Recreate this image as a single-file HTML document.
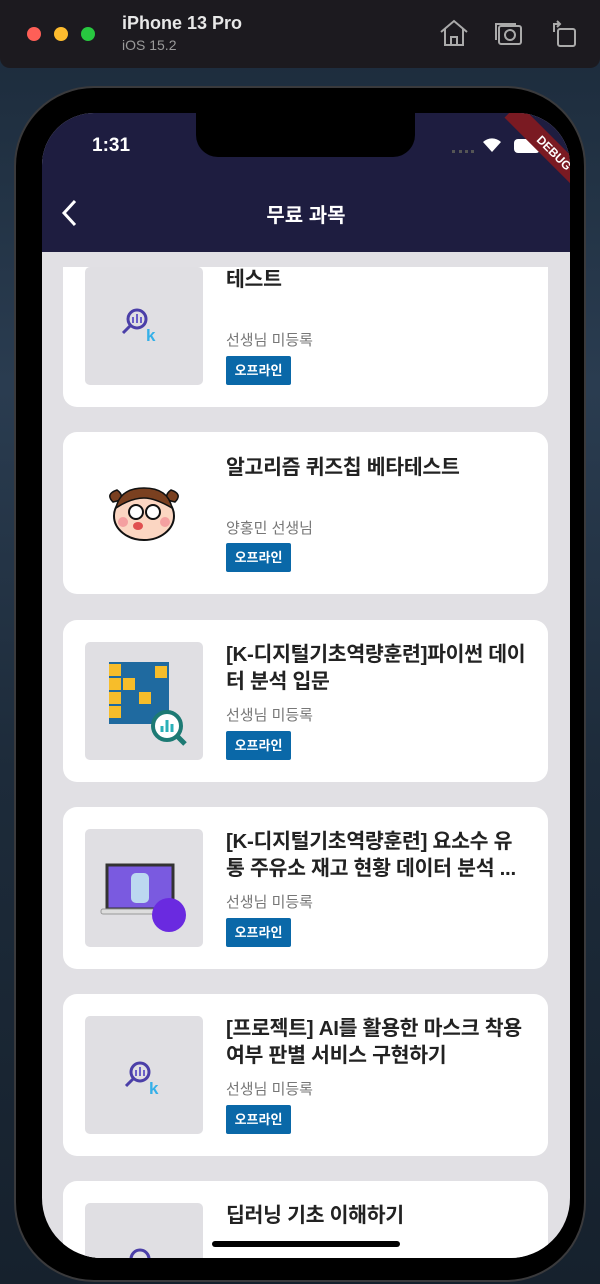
<!DOCTYPE html>
<html><head><meta charset="utf-8">
<style>
*{margin:0;padding:0;box-sizing:border-box}
html,body{width:600px;height:1284px;overflow:hidden}
body{position:relative;background:linear-gradient(180deg,#1b2a3a 0%,#2a3c50 30%,#1d2b3a 60%,#16212d 100%);font-family:"Liberation Sans","Noto Sans CJK KR",sans-serif}
.tb{position:absolute;left:0;top:0;width:600px;height:68px;background:#1c1a1f;border-radius:0 0 10px 10px}
.dot{position:absolute;top:27px;width:14px;height:14px;border-radius:50%}
.phone{position:absolute;left:14px;top:86px;width:572px;height:1196px;background:#000;border-radius:80px;border:2px solid #3a3a3c}
.screen{position:absolute;left:42px;top:113px;width:528px;height:1145px;background:#e1e0e4;border-radius:52px 52px 60px 60px;overflow:hidden}
.nav{position:absolute;left:0;top:0;width:528px;height:139px;background:#1e1d40;z-index:5;overflow:hidden}
.notch{position:absolute;left:154px;top:0;width:219px;height:44px;background:#000;border-radius:0 0 22px 22px}
.card{position:absolute;left:21px;width:485px;height:162px;background:#fff;border-radius:14px}
.img{position:absolute;left:22px;top:22px;width:118px;height:118px;background:#e0dfe3;border-radius:5px}
.t{position:absolute;left:163px;top:21px;width:300px;font-size:20.5px;font-weight:bold;color:#222;line-height:27px;letter-spacing:-0.3px;word-break:break-all}
.s{position:absolute;left:163px;top:84px;font-size:15px;color:#777}
.b{position:absolute;left:163px;top:111px;width:65px;height:29px;background:#0a68a8;color:#fff;font-size:13px;font-weight:bold;text-align:center;line-height:29px;border-radius:2px}
</style></head><body>
<div class="tb">
<div class="dot" style="left:27px;background:#fe5f57"></div>
<div class="dot" style="left:54px;background:#febc2e"></div>
<div class="dot" style="left:81px;background:#28c840"></div>
<div style="position:absolute;left:122px;top:13px;color:#e8e8e8;font-size:18px;font-weight:bold">iPhone 13 Pro</div>
<div style="position:absolute;left:122px;top:37px;color:#9a9a9a;font-size:14px">iOS 15.2</div>
<svg style="position:absolute;left:438px;top:18px" width="32" height="30" viewBox="0 0 32 30" fill="none" stroke="#aaa" stroke-width="2"><path d="M3 14 L16 3 L29 14 M7 11 V27 H25 V11 M13 27 V19 H19 V27"/></svg>
<svg style="position:absolute;left:494px;top:20px" width="30" height="28" viewBox="0 0 30 28" fill="none" stroke="#aaa" stroke-width="2"><rect x="5" y="6" width="22" height="18" rx="2"/><path d="M2 20 V4 H22"/><circle cx="16" cy="15" r="5"/></svg>
<svg style="position:absolute;left:550px;top:18px" width="28" height="30" viewBox="0 0 28 30" fill="none" stroke="#aaa" stroke-width="2"><rect x="8" y="11" width="17" height="17" rx="2"/><path d="M4 14 V6 H10 M7 3 L10 6 L7 9"/></svg>
</div>
<div class="phone"></div>
<div class="screen">
<div class="nav">
<div style="position:absolute;left:50px;top:22px;color:#fff;font-size:19px;font-weight:bold">1:31</div>
<div style="position:absolute;left:410px;top:37px;width:22px;height:3px;border-top:3px dotted #555"></div>
<svg style="position:absolute;left:440px;top:24px" width="20" height="16" viewBox="0 0 20 16"><path d="M10 15 L1 5 A13 13 0 0 1 19 5 Z" fill="#fff"/></svg>
<div style="position:absolute;left:472px;top:26px;width:26px;height:14px;background:#fff;border-radius:4px"></div>
<div style="position:absolute;left:452px;top:30px;width:120px;height:20px;background:#7a1a22;transform:rotate(45deg);color:#fff;font-size:12px;font-weight:bold;text-align:center;line-height:20px">DEBUG</div>
<div class="notch"></div>
<svg style="position:absolute;left:18px;top:85px" width="20" height="30" viewBox="0 0 20 30"><path d="M15 3 L4 15 L15 27" fill="none" stroke="#fff" stroke-width="3"/></svg>
<div style="position:absolute;left:0;width:528px;top:86px;text-align:center;color:#fff;font-size:20px;font-weight:bold">무료 과목</div>
</div>

<div class="card" style="top:132px"><div class="img" style="top:22px">
<svg width="118" height="118" viewBox="0 0 118 118"><circle cx="52" cy="52" r="9" fill="none" stroke="#4b3fa8" stroke-width="3"/><path d="M45 59 L38 66" stroke="#4b3fa8" stroke-width="3"/><path d="M48 56 V50 M52 56 V47 M56 56 V50" stroke="#6a5fc8" stroke-width="2"/><text x="61" y="74" font-size="17" font-weight="bold" fill="#35b0e8" font-family="Liberation Sans">k</text></svg>
</div><div class="t">테스트</div><div class="s">선생님 미등록</div><div class="b">오프라인</div></div>
<div style="position:absolute;left:0;top:139px;width:528px;height:15px;background:#e1e0e4;z-index:4"></div>

<div class="card" style="top:319px"><div class="img" style="background:#fff">
<svg width="118" height="118" viewBox="0 0 118 118"><path d="M28 48 Q20 40 32 36 Q38 40 36 46Z M90 48 Q98 40 86 36 Q80 40 82 46Z" fill="#7a4020" stroke="#111" stroke-width="1.5"/><ellipse cx="59" cy="62" rx="30" ry="24" fill="#fbd6c2" stroke="#111" stroke-width="2"/><path d="M31 54 Q35 34 59 34 Q83 34 87 54 Q70 44 59 44 Q46 44 31 54Z" fill="#7a4020" stroke="#111" stroke-width="1.5"/><circle cx="51" cy="58" r="7" fill="#fff" stroke="#111" stroke-width="2"/><circle cx="68" cy="58" r="7" fill="#fff" stroke="#111" stroke-width="2"/><circle cx="38" cy="68" r="5" fill="#f4a0a0"/><circle cx="80" cy="68" r="5" fill="#f4a0a0"/><ellipse cx="53" cy="72" rx="5" ry="4" fill="#e05050"/></svg>
</div><div class="t" style="top:22px">알고리즘 퀴즈칩 베타테스트</div><div class="s" style="top:85px">양홍민 선생님</div><div class="b">오프라인</div></div>

<div class="card" style="top:507px"><div class="img">
<svg width="118" height="118" viewBox="0 0 118 118"><rect x="24" y="20" width="60" height="62" fill="#1f6aa0"/>
<g fill="#f7bd2a"><rect x="24" y="22" width="12" height="12"/><rect x="24" y="36" width="12" height="12"/><rect x="24" y="50" width="12" height="12"/><rect x="24" y="64" width="12" height="12"/><rect x="38" y="36" width="12" height="12"/><rect x="70" y="24" width="12" height="12"/><rect x="54" y="50" width="12" height="12"/></g>
<circle cx="82" cy="84" r="14" fill="#fff" stroke="#1d7a74" stroke-width="4"/><path d="M92 94 L100 102" stroke="#1d7a74" stroke-width="5"/><path d="M77 90 V84 M82 90 V78 M87 90 V82" stroke="#2ab0b8" stroke-width="3"/></svg>
</div><div class="t">[K-디지털기초역량훈련]파이썬 데이터 분석 입문</div><div class="s">선생님 미등록</div><div class="b">오프라인</div></div>

<div class="card" style="top:694px"><div class="img">
<svg width="118" height="118" viewBox="0 0 118 118"><rect x="22" y="36" width="66" height="44" fill="#7a5ae0" stroke="#333" stroke-width="3"/><rect x="16" y="80" width="76" height="5" rx="2" fill="#ddd" stroke="#999"/><rect x="46" y="44" width="18" height="30" rx="5" fill="#bcd8f0"/><circle cx="84" cy="86" r="17" fill="#6a2ae0"/></svg>
</div><div class="t">[K-디지털기초역량훈련] 요소수 유통 주유소 재고 현황 데이터 분석 ...</div><div class="s">선생님 미등록</div><div class="b">오프라인</div></div>

<div class="card" style="top:881px"><div class="img">
<svg width="118" height="118" viewBox="0 0 118 118"><circle cx="55" cy="56" r="9" fill="none" stroke="#4b3fa8" stroke-width="3"/><path d="M48 63 L41 70" stroke="#4b3fa8" stroke-width="3"/><path d="M51 60 V54 M55 60 V51 M59 60 V54" stroke="#6a5fc8" stroke-width="2"/><text x="64" y="78" font-size="17" font-weight="bold" fill="#35b0e8" font-family="Liberation Sans">k</text></svg>
</div><div class="t">[프로젝트] AI를 활용한 마스크 착용 여부 판별 서비스 구현하기</div><div class="s">선생님 미등록</div><div class="b">오프라인</div></div>

<div class="card" style="top:1068px"><div class="img">
<svg width="118" height="118" viewBox="0 0 118 118"><circle cx="55" cy="56" r="9" fill="none" stroke="#4b3fa8" stroke-width="3"/></svg>
</div><div class="t">딥러닝 기초 이해하기</div></div>

<div style="position:absolute;left:170px;top:1128px;width:188px;height:6px;background:#000;border-radius:3px;z-index:6"></div>
</div>
</body></html>
